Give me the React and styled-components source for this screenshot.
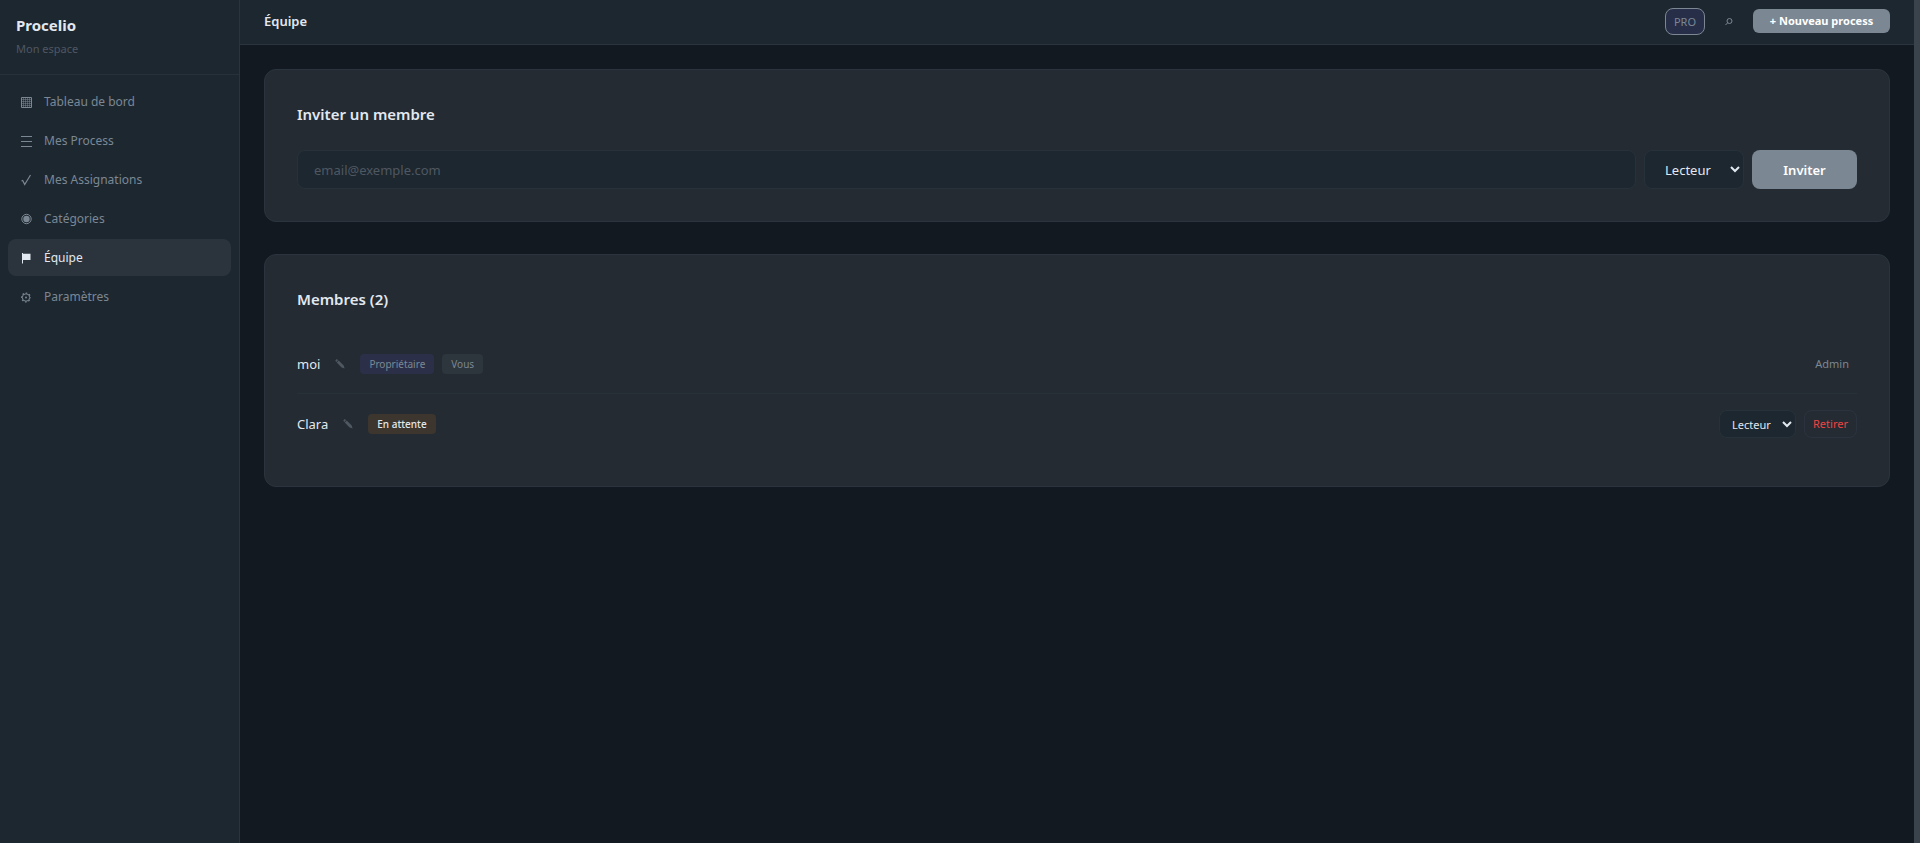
import React from "react";
import styled, { createGlobalStyle, css } from "styled-components";

const c = {
  page: "#121920",
  panel: "#1d2730",
  card: "#242b32",
  line: "#2b343e",
  lineSoft: "#27313a",
  text: "#e2e8f0",
  muted: "#7b8894",
  faint: "#4f5761",
  accent: "#7b8894",
};

const GlobalStyle = createGlobalStyle`
  *, *::before, *::after { box-sizing: border-box; }
  body {
    margin: 0;
    background: ${c.page};
    color: ${c.text};
    font-family: "Noto Sans", "Open Sans", sans-serif;
    font-size: 13px;
    line-height: 20px;
  }
  button, input, select { font: inherit; color: inherit; margin: 0; }
  h1, h2, p, ul { margin: 0; padding: 0; }
`;

const Shell = styled.div`
  display: grid;
  grid-template-columns: 240px minmax(0, 1fr) 6px;
  min-height: 100vh;
`;

const Sidebar = styled.aside`
  background: ${c.panel};
  border-right: 1px solid ${c.line};
`;

const Brand = styled.div`
  padding: 13px 16px 15px;
  border-bottom: 1px solid ${c.lineSoft};
`;

const BrandName = styled.p`
  font-size: 15px;
  line-height: 24px;
  font-weight: 700;
`;

const Workspace = styled.p`
  margin-top: 2px;
  font-size: 11px;
  color: ${c.faint};
`;

const Nav = styled.nav`
  display: flex;
  flex-direction: column;
  gap: 2px;
  padding: 8px;
`;

const NavLink = styled.a`
  display: flex;
  align-items: center;
  gap: 8px;
  height: 37px;
  padding: 0 8px;
  border-radius: 8px;
  font-size: 12px;
  text-decoration: none;
  color: ${({ $active }) => ($active ? c.text : c.muted)};
  background: ${({ $active }) => ($active ? "#2b343d" : "transparent")};
`;

const NavIcon = styled.svg`
  width: 20px;
  height: 20px;
  fill: none;
  stroke: currentColor;
`;

const Main = styled.div`
  min-width: 0;
`;

const Header = styled.header`
  display: flex;
  align-items: center;
  justify-content: space-between;
  height: 45px;
  padding: 0 24px 2px;
  background: ${c.panel};
  border-bottom: 1px solid ${c.line};
`;

const PageTitle = styled.h1`
  font-size: 13px;
  line-height: 20px;
  font-weight: 600;
`;

const Actions = styled.div`
  display: flex;
  align-items: center;
`;

const Plan = styled.span`
  padding: 0 8px;
  border: 1px solid ${c.muted};
  border-radius: 8px;
  background: #272e48;
  color: ${c.muted};
  font-size: 11px;
  line-height: 25px;
`;

const IconButton = styled.button`
  display: flex;
  align-items: center;
  justify-content: center;
  padding: 0;
  border: 0;
  background: none;
  color: ${({ $faint }) => ($faint ? c.faint : c.muted)};
  cursor: pointer;
`;

const SearchButton = styled(IconButton)`
  width: 48px;
  height: 24px;
`;

const Primary = styled.button`
  border: 0;
  background: ${c.accent};
  color: #fff;
  padding: 0;
  cursor: pointer;
  ${({ $small }) =>
    $small
      ? css`height: 24px; width: 137px; font-size: 11px; font-weight: 700; border-radius: 6px;`
      : css`height: 39px; width: 105px; font-weight: 600; border-radius: 8px;`}
`;

const Content = styled.main`
  display: flex;
  flex-direction: column;
  gap: 32px;
  padding: 24px;
`;

const Card = styled.section`
  padding: 32px;
  background: ${c.card};
  border: 1px solid ${c.line};
  border-radius: 12px;
`;

const CardTitle = styled.h2`
  margin-bottom: 24px;
  font-size: 15px;
  line-height: 24px;
  font-weight: 600;
`;

const InviteForm = styled.form`
  display: flex;
  gap: 8px;
`;

const field = css`
  background: ${c.panel};
  border: 1px solid ${c.lineSoft};
  border-radius: 8px;
  outline: none;
`;

const EmailInput = styled.input`
  ${field}
  flex: 1;
  min-width: 0;
  height: 39px;
  padding: 0 16px;
  &::placeholder { color: ${c.faint}; opacity: 1; }
`;

const RoleSelect = styled.select`
  ${field}
  ${({ $small }) =>
    $small
      ? css`width: 77px; height: 28px; padding: 0 0 0 8px; font-size: 11px;`
      : css`width: 100px; height: 39px; padding: 0 0 0 16px;`}
`;

const Members = styled.ul`
  list-style: none;
`;

const Member = styled.li`
  display: flex;
  align-items: center;
  justify-content: space-between;
  padding: 16px 0;
  & + & { border-top: 1px solid ${c.lineSoft}; }
`;

const Group = styled.div`
  display: flex;
  align-items: center;
  gap: 8px;
`;

const EditButton = styled(IconButton)`
  width: 24px;
  height: 20px;
`;

const Tag = styled.span`
  padding: 0 9px;
  border-radius: 4px;
  font-size: 10px;
  line-height: 20px;
  color: ${({ $tone }) => ($tone === "pending" ? c.text : c.muted)};
  font-weight: ${({ $tone }) => ($tone === "pending" ? 500 : 400)};
  background: ${({ $tone }) =>
    ({ owner: "#2b3048", self: "#2d353d", pending: "#3c362e" })[$tone]};
`;

const Role = styled.span`
  padding: 3px 8px;
  font-size: 11px;
  color: ${c.muted};
`;

const RemoveButton = styled.button`
  width: 53px;
  height: 28px;
  padding: 0;
  border: 1px solid ${c.line};
  border-radius: 8px;
  background: transparent;
  color: #ef4444;
  font-size: 11px;
  cursor: pointer;
`;

const ScrollTrack = styled.div`
  background: #3a424c;
`;

const icons = {
  board: (
    <>
      <path d="M5.500 5.500h10v10h-10z" />
      <path d="M7.500 6v9M9.500 6v9M11.500 6v9M13.500 6v9M6 7.500h9M6 9.500h9M6 11.500h9M6 13.500h9" opacity="0.500" />
    </>
  ),
  list: <path d="M5 5.500h11M5 10.500h11M5 15.500h11" />,
  check: <path d="M5.500 11l1.200-.5 2 4L14.500 5" strokeWidth="1.200" />,
  target: (
    <>
      <circle cx="10.500" cy="10" r="4.700" />
      <circle cx="10.500" cy="10" r="3.200" fill="currentColor" stroke="none" />
    </>
  ),
  flag: <path d="M6 5h1v.7h7.500v6.300H7v3.500H6z" fill="currentColor" stroke="none" />,
  gear: (
    <>
      <circle cx="10" cy="10.500" r="3.700" />
      <circle cx="10" cy="10.500" r="4.400" strokeWidth="1.200" strokeDasharray="1.600 1.856" strokeDashoffset="0.800" />
      <circle cx="10" cy="10.500" r="1" fill="currentColor" stroke="none" />
    </>
  ),
};

const links = [
  ["board", "Tableau de bord"],
  ["list", "Mes Process"],
  ["check", "Mes Assignations"],
  ["target", "Catégories"],
  ["flag", "Équipe"],
  ["gear", "Paramètres"],
];

function Pencil() {
  return (
    <svg width="10" height="10" viewBox="0 0 10 10" fill="currentColor" aria-hidden="true">
      <path d="M1.800 .3C1 .3.500 1 .4 1.900L1.300 2.900 3.200 1.100zM3.700 1.500L1.700 3.400 6.600 8.500 9.600 9.500 8.700 6.500z" />
    </svg>
  );
}

function RoleField({ label, small }) {
  return (
    <RoleSelect $small={small} aria-label={label} defaultValue="Lecteur">
      <option>Lecteur</option>
      <option>Admin</option>
    </RoleSelect>
  );
}

export default function App() {
  return (
    <>
      <GlobalStyle />
      <Shell>
        <Sidebar>
          <Brand>
            <BrandName>Procelio</BrandName>
            <Workspace>Mon espace</Workspace>
          </Brand>
          <Nav>
            {links.map(([icon, label]) => (
              <NavLink key={label} href="#" $active={label === "Équipe"}>
                <NavIcon viewBox="0 0 20 20" aria-hidden="true">{icons[icon]}</NavIcon>
                {label}
              </NavLink>
            ))}
          </Nav>
        </Sidebar>
        <Main>
          <Header>
            <PageTitle>Équipe</PageTitle>
            <Actions>
              <Plan>PRO</Plan>
              <SearchButton type="button" aria-label="Rechercher">
                <svg width="10" height="10" viewBox="0 0 10 10" fill="none" stroke="currentColor">
                  <circle cx="5.500" cy="5" r="2.500" />
                  <path d="M3.700 6.800L1.500 9" />
                </svg>
              </SearchButton>
              <Primary $small type="button">+ Nouveau process</Primary>
            </Actions>
          </Header>
          <Content>
            <Card>
              <CardTitle>Inviter un membre</CardTitle>
              <InviteForm onSubmit={(e) => e.preventDefault()}>
                <EmailInput type="email" placeholder="email@exemple.com" aria-label="Email" />
                <RoleField label="Rôle" />
                <Primary type="submit">Inviter</Primary>
              </InviteForm>
            </Card>
            <Card>
              <CardTitle>Membres (2)</CardTitle>
              <Members>
                <Member>
                  <Group>
                    <span>moi</span>
                    <EditButton $faint type="button" aria-label="Modifier moi"><Pencil /></EditButton>
                    <Tag $tone="owner">Propriétaire</Tag>
                    <Tag $tone="self">Vous</Tag>
                  </Group>
                  <Role>Admin</Role>
                </Member>
                <Member>
                  <Group>
                    <span>Clara</span>
                    <EditButton $faint type="button" aria-label="Modifier Clara"><Pencil /></EditButton>
                    <Tag $tone="pending">En attente</Tag>
                  </Group>
                  <Group>
                    <RoleField small label="Rôle de Clara" />
                    <RemoveButton type="button">Retirer</RemoveButton>
                  </Group>
                </Member>
              </Members>
            </Card>
          </Content>
        </Main>
        <ScrollTrack />
      </Shell>
    </>
  );
}
